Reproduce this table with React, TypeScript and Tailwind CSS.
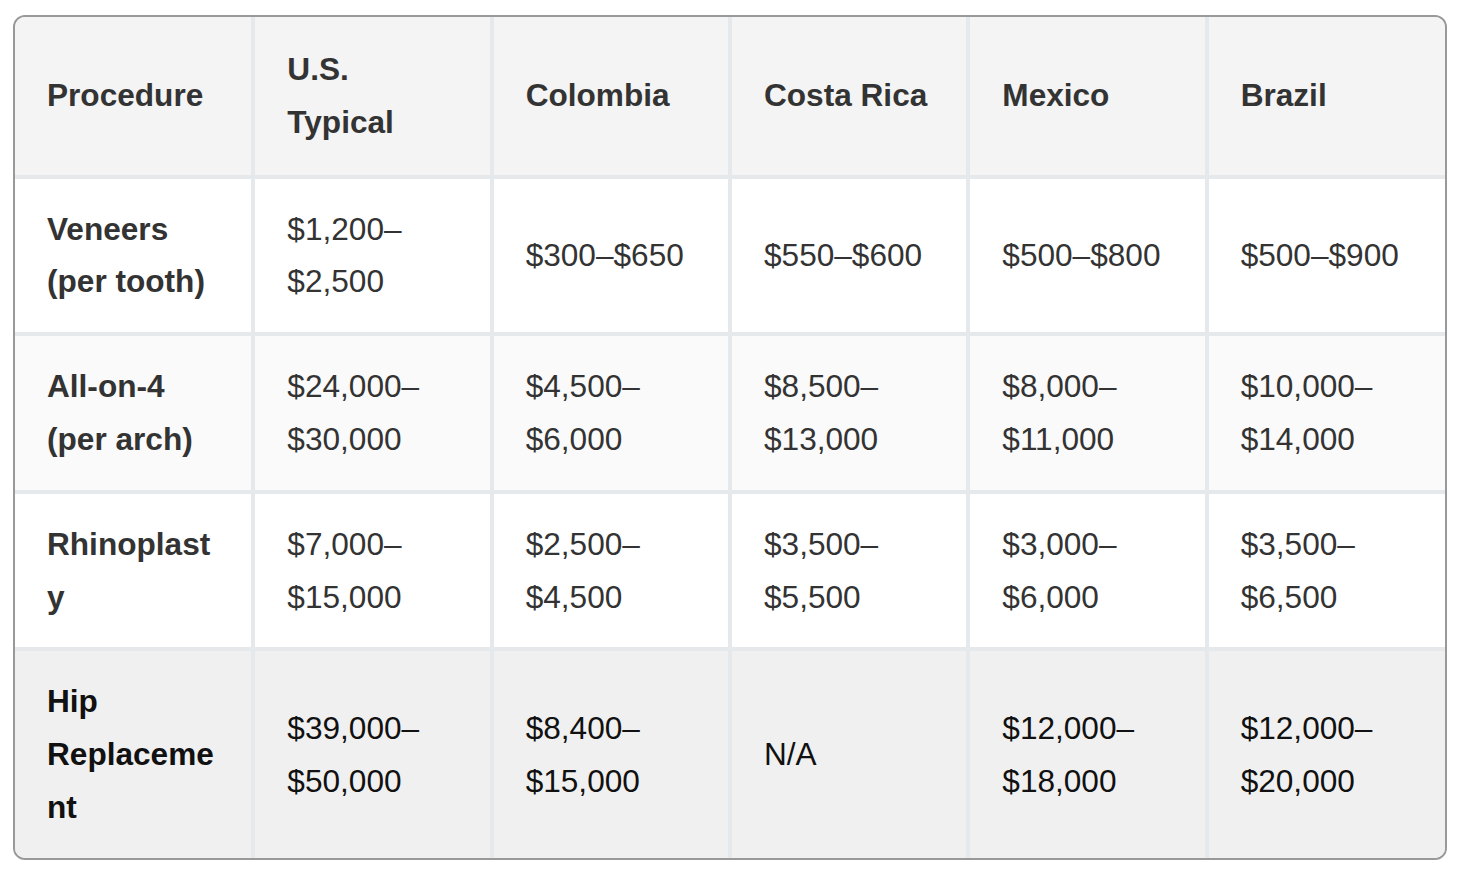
import React from "react";

type Row = {
  procedure: string;
  prices: string[];
};

const headers = ["Procedure", "U.S. Typical", "Colombia", "Costa Rica", "Mexico", "Brazil"];

const rows: Row[] = [
  {
    procedure: "Veneers (per tooth)",
    prices: ["$1,200–$2,500", "$300–$650", "$550–$600", "$500–$800", "$500–$900"],
  },
  {
    procedure: "All-on-4 (per arch)",
    prices: ["$24,000–$30,000", "$4,500–$6,000", "$8,500–$13,000", "$8,000–$11,000", "$10,000–$14,000"],
  },
  {
    procedure: "Rhinoplasty",
    prices: ["$7,000–$15,000", "$2,500–$4,500", "$3,500–$5,500", "$3,000–$6,000", "$3,500–$6,500"],
  },
  {
    procedure: "Hip Replacement",
    prices: ["$39,000–$50,000", "$8,400–$15,000", "N/A", "$12,000–$18,000", "$12,000–$20,000"],
  },
];

// zebra + last row highlighted
const rowBg = ["bg-white", "bg-[#fafafa]", "bg-white", "bg-[#f0f0f0]"];

const App = (): JSX.Element => {
  return (
    <div className="min-h-screen bg-white pt-[15px] pl-[13px] font-['Liberation_Sans',Arial,sans-serif]">
      <div className="w-[1434px] overflow-hidden rounded-[12px] border-2 border-[#999999]">
        <table className="w-full table-fixed border-collapse border-hidden text-[31.6px] leading-[52.8px]">
          <thead>
            <tr className="bg-[#f4f4f4]">
              {headers.map((h) => (
                <th
                  key={h}
                  className="border-4 border-[#e6e9ec] pl-8 pr-7 py-[26px] text-left align-middle font-bold text-[#333333]"
                >
                  {h}
                </th>
              ))}
            </tr>
          </thead>
          <tbody>
            {rows.map((row, index) => (
              <tr key={row.procedure} className={rowBg[index]}>
                <td
                  className={`border-4 border-[#e6e9ec] pl-8 pr-7 py-6 align-middle font-bold break-words ${
                    index === 3 ? "text-[#111111]" : "text-[#333333]"
                  }`}
                >
                  {row.procedure}
                </td>
                {row.prices.map((price, i) => (
                  <td
                    key={i}
                    className={`border-4 border-[#e6e9ec] pl-8 pr-7 py-6 align-middle break-words ${
                      index === 3 ? "text-[#111111]" : "text-[#333333]"
                    }`}
                  >
                    {price}
                  </td>
                ))}
              </tr>
            ))}
          </tbody>
        </table>
      </div>
    </div>
  );
};

export default App;
